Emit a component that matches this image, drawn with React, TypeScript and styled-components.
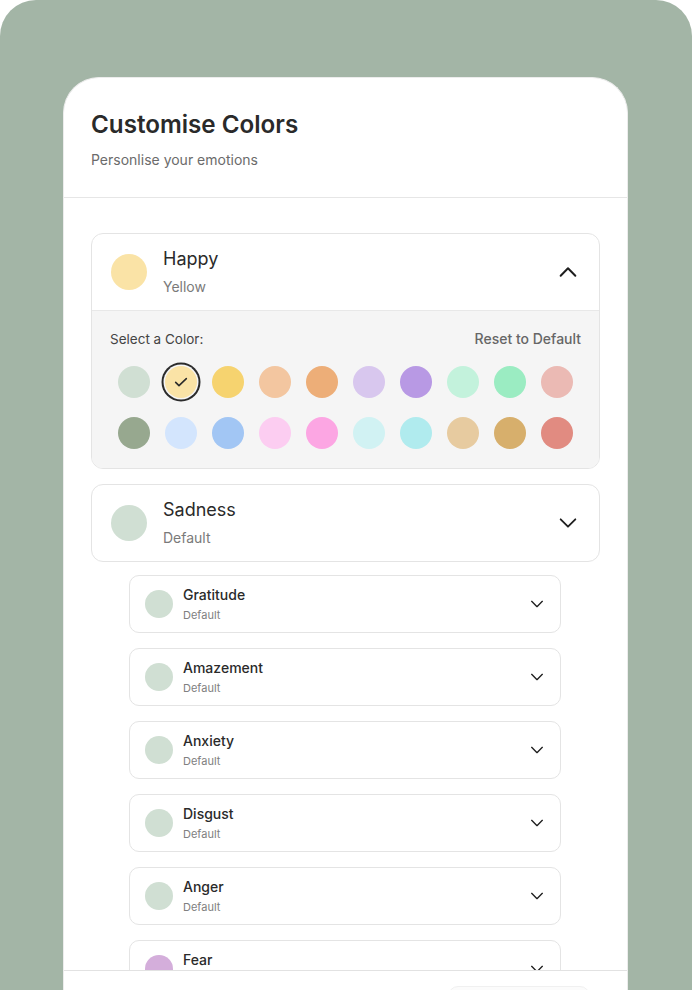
import React from "react";
import styled, { createGlobalStyle } from "styled-components";

const GlobalStyle = createGlobalStyle`
  * { box-sizing: border-box; }
  body {
    margin: 0;
    background: #ffffff;
    font-family: Inter, "Noto Sans", "Liberation Sans", sans-serif;
    overflow: hidden;
  }
`;

const Frame = styled.div`
  width: 692px;
  height: 990px;
  background: #a3b5a6;
  border-radius: 36px 36px 0 0;
  padding: 77px 0 0 63px;
  overflow: hidden;
`;

const Card = styled.div`
  width: 565px;
  height: 960px;
  background: #ffffff;
  border: 1px solid #ececec;
  border-bottom: 0;
  border-radius: 36px 36px 0 0;
  display: flex;
  flex-direction: column;
  overflow: hidden;
`;

const Header = styled.header`
  padding: 32px 27px 27px;
  border-bottom: 1px solid #e6e6e6;
  display: flex;
  flex-direction: column;
  gap: 10px;
`;

const Title = styled.h1`
  margin: 0;
  font-size: 24.2px;
  line-height: 30px;
  font-weight: 600;
  color: #2a2a2a;
`;

const Subtitle = styled.p`
  margin: 0;
  font-size: 14px;
  line-height: 20px;
  color: #6b6b6b;
`;

const List = styled.div`
  flex: 1;
  overflow: hidden;
  padding: 35px 27px;
  display: flex;
  flex-direction: column;
  gap: 15px;
`;

const EmotionCard = styled.div`
  flex-shrink: 0;
  border: 1px solid #e4e4e4;
  border-radius: 12px;
  overflow: hidden;
  background: #ffffff;
`;

const CardHead = styled.div`
  height: 76px;
  display: flex;
  align-items: center;
  padding: 0 20px 0 19px;
  gap: 16px;
`;

const Dot = styled.span<{ $color: string; $size: number }>`
  width: ${(p) => p.$size}px;
  height: ${(p) => p.$size}px;
  border-radius: 50%;
  background: ${(p) => p.$color};
  flex-shrink: 0;
`;

const Texts = styled.div<{ $gap: number }>`
  flex: 1;
  display: flex;
  flex-direction: column;
  gap: ${(p) => p.$gap}px;
`;

const Name = styled.span`
  font-size: 18px;
  line-height: 22px;
  color: #2a2a2a;
`;

const Meta = styled.span`
  font-size: 14px;
  line-height: 18px;
  color: #7a7a7a;
`;

const Panel = styled.div`
  background: #f5f5f5;
  border-top: 1px solid #e8e8e8;
  padding: 19px 18px 19px;
  display: flex;
  flex-direction: column;
  gap: 18px;
`;

const PanelRow = styled.div`
  display: flex;
  justify-content: space-between;
  font-size: 14px;
  line-height: 18px;
`;

const Label = styled.span`
  color: #444444;
  font-size: 13.5px;
`;

const Reset = styled.span`
  color: #666666;
  font-weight: 500;
`;

const Swatches = styled.div`
  display: grid;
  grid-template-columns: repeat(10, 1fr);
  row-gap: 19px;
  justify-items: center;
`;

const Swatch = styled.span<{ $color: string; $selected?: boolean }>`
  width: 32px;
  height: 32px;
  border-radius: 50%;
  background: ${(p) => p.$color};
  display: flex;
  align-items: center;
  justify-content: center;
  box-shadow: ${(p) =>
    p.$selected ? "0 0 0 1.5px #f5f5f5, 0 0 0 3.5px #2b2b2b" : "none"};
`;

const SubList = styled.div`
  flex-shrink: 0;
  margin: -2px 0 0 38px;
  width: 432px;
  display: flex;
  flex-direction: column;
  gap: 15px;
`;

const SubCard = styled.div`
  flex-shrink: 0;
  height: 58px;
  border: 1px solid #e4e4e4;
  border-radius: 10px;
  display: flex;
  align-items: center;
  padding: 0 15px 0 15px;
  gap: 10px;
`;

const SubName = styled.span`
  font-size: 14px;
  line-height: 18px;
  font-weight: 500;
  color: #2a2a2a;
`;

const SubMeta = styled.span`
  font-size: 11px;
  line-height: 14px;
  color: #808080;
`;

const Footer = styled.footer`
  height: 67px;
  flex-shrink: 0;
  border-top: 1px solid #e2e2e2;
  background: #ffffff;
  padding: 15px 37px 0;
  display: flex;
  justify-content: flex-end;
  align-items: flex-start;
`;

const SaveButton = styled.button`
  width: 142px;
  height: 40px;
  border: 1px solid #f0f0f0;
  border-radius: 10px;
  background: #fbfbfb;
`;

const Chevron = ({ up, size }: { up?: boolean; size: number }) => (
  <svg
    width={size}
    height={size}
    viewBox="0 0 24 24"
    fill="none"
    stroke="#1f1f1f"
    strokeWidth={up ? 2.2 : 2}
    strokeLinecap="round"
    strokeLinejoin="round"
  >
    <path d={up ? "M4 16l8-8 8 8" : "M4 8l8 8 8-8"} />
  </svg>
);

const Check = () => (
  <svg width="16" height="16" viewBox="0 0 24 24" fill="none" stroke="#2b2b2b" strokeWidth={2.4} strokeLinecap="round" strokeLinejoin="round">
    <path d="M4 12.5l5 5L20 7" />
  </svg>
);

const palette = [
  "#d0dfd3", "#fae3a6", "#f6d36f", "#f3c6a0", "#edae78",
  "#d8c7ee", "#b899e4", "#c3f2dc", "#9becc2", "#ebbab4",
  "#97a88f", "#d3e5fd", "#a2c6f4", "#fccdf1", "#fca6e3",
  "#d1f2f3", "#b0ebee", "#e7cba0", "#d7af6c", "#e18b81",
];

const subEmotions = [
  { name: "Gratitude", color: "#d0dfd3" },
  { name: "Amazement", color: "#d0dfd3" },
  { name: "Anxiety", color: "#d0dfd3" },
  { name: "Disgust", color: "#d0dfd3" },
  { name: "Anger", color: "#d0dfd3" },
  { name: "Fear", color: "#d4aedb" },
];

const App: React.FC = () => {
  return (
    <>
      <GlobalStyle />
      <Frame>
        <Card>
          <Header>
            <Title>Customise Colors</Title>
            <Subtitle>Personlise your emotions</Subtitle>
          </Header>
          <List>
            <EmotionCard>
              <CardHead>
                <Dot $color="#fae3a6" $size={36} />
                <Texts $gap={8}>
                  <Name>Happy</Name>
                  <Meta>Yellow</Meta>
                </Texts>
                <Chevron up size={22} />
              </CardHead>
              <Panel>
                <PanelRow>
                  <Label>Select a Color:</Label>
                  <Reset>Reset to Default</Reset>
                </PanelRow>
                <Swatches>
                  {palette.map((c, i) => (
                    <Swatch key={c} $color={c} $selected={i === 1}>
                      {i === 1 && <Check />}
                    </Swatch>
                  ))}
                </Swatches>
              </Panel>
            </EmotionCard>
            <EmotionCard>
              <CardHead>
                <Dot $color="#d0dfd3" $size={36} />
                <Texts $gap={8}>
                  <Name>Sadness</Name>
                  <Meta>Default</Meta>
                </Texts>
                <Chevron size={22} />
              </CardHead>
            </EmotionCard>
            <SubList>
              {subEmotions.map((e) => (
                <SubCard key={e.name}>
                  <Dot $color={e.color} $size={28} />
                  <Texts $gap={4}>
                    <SubName>{e.name}</SubName>
                    <SubMeta>Default</SubMeta>
                  </Texts>
                  <Chevron size={16} />
                </SubCard>
              ))}
            </SubList>
          </List>
          <Footer>
            <SaveButton aria-label="Save" />
          </Footer>
        </Card>
      </Frame>
    </>
  );
};

export default App;
